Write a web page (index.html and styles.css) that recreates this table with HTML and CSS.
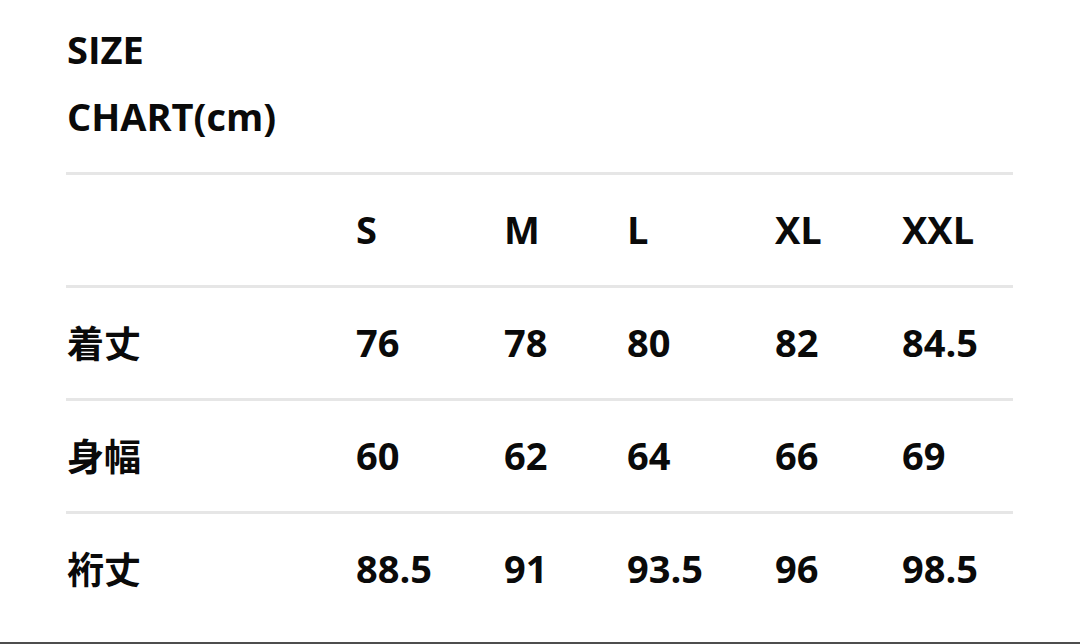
FILE: index.html
```html
<!DOCTYPE html>
<html lang="ja">
<head>
<meta charset="utf-8">
<link rel="stylesheet" href="styles.css">
</head>
<body>
<div class="page">
  <h1 class="title">SIZE<br>CHART(cm)</h1>
  <div class="table">
    <div class="row">
      <div class="cell"></div>
      <div class="cell">S</div>
      <div class="cell">M</div>
      <div class="cell">L</div>
      <div class="cell">XL</div>
      <div class="cell">XXL</div>
    </div>
    <div class="row">
      <div class="cell label">着丈</div>
      <div class="cell">76</div>
      <div class="cell">78</div>
      <div class="cell">80</div>
      <div class="cell">82</div>
      <div class="cell">84.5</div>
    </div>
    <div class="row">
      <div class="cell label">身幅</div>
      <div class="cell">60</div>
      <div class="cell">62</div>
      <div class="cell">64</div>
      <div class="cell">66</div>
      <div class="cell">69</div>
    </div>
    <div class="row">
      <div class="cell label">裄丈</div>
      <div class="cell">88.5</div>
      <div class="cell">91</div>
      <div class="cell">93.5</div>
      <div class="cell">96</div>
      <div class="cell">98.5</div>
    </div>
  </div>
</div>
<div class="bottom-line"></div>
</body>
</html>
```
FILE: styles.css
```css
html, body {
  margin: 0;
  padding: 0;
  background: #fff;
}
body {
  width: 1080px;
  height: 644px;
  overflow: hidden;
  font-family: "Open Sans", "Noto Sans CJK JP", sans-serif;
  color: #0a0a0a;
}
.page {
  padding: 16px 0 0 66px;
  height: 626px;
  box-sizing: border-box;
}
.title {
  margin: 0 0 22px 1px;
  font-size: 38px;
  line-height: 67px;
  font-weight: 700;
}
.table {
  width: 947px;
}
.row {
  display: grid;
  grid-template-columns: 290px 148px 123px 148px 127px 111px;
  height: 110px;
  border-top: 3px solid #e6e6e6;
}
.cell {
  display: flex;
  align-items: center;
  font-size: 38px;
  font-weight: 700;
  line-height: 1.362;
  padding-bottom: 1px;
}
.label {
  font-family: "Noto Sans CJK JP", sans-serif;
  font-size: 37px;
  font-weight: 700;
  padding-left: 1px;
}
.bottom-line {
  margin-top: 16px;
  height: 2px;
  background: #4d4d4d;
}
```
